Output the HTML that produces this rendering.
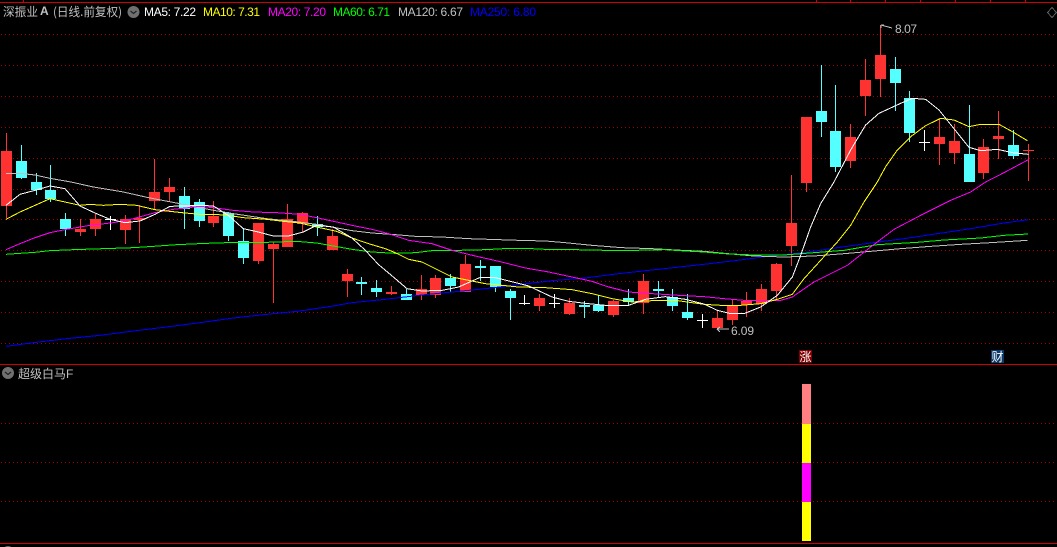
<!DOCTYPE html>
<html><head><meta charset="utf-8"><style>
html,body{margin:0;padding:0;background:#000;width:1057px;height:547px;overflow:hidden}
svg{display:block}
text{font-family:"Liberation Sans","WenQuanYi Zen Hei",sans-serif;font-size:12px}
.c{font-family:"WenQuanYi Zen Hei","Noto Sans CJK SC",sans-serif}
polyline{fill:none;stroke-width:1;vector-effect:non-scaling-stroke}
</style></head><body>
<svg width="1057" height="547" viewBox="0 0 1057 547" xmlns="http://www.w3.org/2000/svg">
<rect width="1057" height="547" fill="#000"/>
<g shape-rendering="crispEdges">
<g stroke="#a00000" stroke-dasharray="1 3" fill="none">
<path d="M1 34.5H1057M1 65.5H1057M1 96.5H1057M1 127.5H1057M1 158.5H1057M1 189.5H1057M1 219.5H1057M1 250.5H1057M1 281.5H1057M1 312.5H1057M1 343.5H1057M1 423.5H1057M1 462.5H1057M1 501.5H1057"/>
</g>
<path fill="#d00000" d="M0 2h1057v1H0zM0 364h1057v1H0zM0 543h1057v1H0zM23 0h1v2h-1zM816 0h1v2h-1zM850 0h1v2h-1zM885 0h1v2h-1zM920 0h1v2h-1zM955 0h1v2h-1zM990 0h1v2h-1zM1025 0h1v2h-1z"/>
<path fill="#ff3232" d="M6 133h1V218h-1zM1 151h11V206H1zM80 219h1V236h-1zM75 229h11V232H75zM95 214h1V236h-1zM90 219h11V229H90zM125 215h1V244h-1zM120 219h11V230H120zM139 205h1V243h-1zM134 218h11V220H134zM154 159h1V210h-1zM149 192h11V201H149zM169 178h1V201h-1zM164 187h11V192H164zM213 201h1V227h-1zM208 216h11V223H208zM258 223h1V264h-1zM253 223h11V261H253zM273 242h1V303h-1zM268 244h11V249H268zM287 204h1V247h-1zM282 219h11V247H282zM302 212h1V232h-1zM297 213h11V224H297zM332 229h1V250h-1zM327 236h11V250H327zM347 269h1V297h-1zM342 274h11V281H342zM391 286h1V295h-1zM386 292h11V294H386zM421 275h1V300h-1zM416 289h11V295H416zM435 275h1V298h-1zM430 278h11V295H430zM465 255h1V292h-1zM460 264h11V292H460zM539 294h1V311h-1zM534 298h11V306H534zM569 298h1V315h-1zM564 303h11V314H564zM613 300h1V317h-1zM608 301h11V315H608zM643 274h1V314h-1zM638 281h11V303H638zM717 311h1V328h-1zM712 318h11V328H712zM732 300h1V325h-1zM727 306h11V320H727zM746 292h1V317h-1zM741 301h11V305H741zM761 284h1V311h-1zM756 289h11V304H756zM776 263h1V301h-1zM771 264h11V291H771zM791 175h1V266h-1zM786 223h11V246H786zM806 117h1V192h-1zM801 117h11V183H801zM850 124h1V168h-1zM845 137h11V161H845zM865 59h1V116h-1zM860 80h11V96H860zM880 25h1V97h-1zM875 55h11V79H875zM939 119h1V165h-1zM934 137h11V144H934zM954 124h1V164h-1zM949 141h11V153H949zM983 139h1V179h-1zM978 147h11V173H978zM998 111h1V159h-1zM993 136h11V139H993zM1028 144h1V181h-1zM1023 150h11V151H1023z"/>
<path fill="#54ffff" d="M21 145h1V179h-1zM16 161h11V178H16zM36 173h1V195h-1zM31 182h11V190H31zM50 165h1V202h-1zM45 190h11V199H45zM65 213h1V236h-1zM60 219h11V229H60zM184 187h1V229h-1zM179 196h11V209H179zM199 199h1V227h-1zM194 202h11V221H194zM228 212h1V241h-1zM223 213h11V236H223zM243 228h1V264h-1zM238 241h11V258H238zM317 216h1V236h-1zM312 224h11V227H312zM361 277h1V295h-1zM356 282h11V284H356zM376 280h1V297h-1zM371 288h11V292H371zM406 289h1V300h-1zM401 294h11V300H401zM450 274h1V292h-1zM445 278h11V286H445zM480 260h1V281h-1zM475 266h11V268H475zM495 266h1V292h-1zM490 266h11V287H490zM510 289h1V320h-1zM505 291h11V298H505zM584 301h1V318h-1zM579 305h11V307H579zM598 295h1V312h-1zM593 305h11V311H593zM628 289h1V306h-1zM623 298h11V302H623zM658 281h1V298h-1zM653 289h11V291H653zM672 289h1V311h-1zM667 297h11V306H667zM687 294h1V320h-1zM682 312h11V318H682zM821 65h1V137h-1zM816 111h11V122H816zM835 85h1V172h-1zM830 131h11V167H830zM895 57h1V111h-1zM890 69h11V83H890zM909 91h1V142h-1zM904 98h11V133H904zM969 105h1V182h-1zM964 154h11V182H964zM1013 130h1V159h-1zM1008 145h11V156H1008z"/>
<path fill="#fff" d="M110 216h1V230h-1zM105 219h11V220H105zM524 295h1V305h-1zM519 303h11V304H519zM554 294h1V308h-1zM549 303h11V304H549zM702 314h1V328h-1zM697 320h11V321H697zM924 130h1V151h-1zM919 142h11V143H919z"/>
<path fill="#ff8080" d="M802 384h9v40h-9z"/>
<path fill="#ffff00" d="M802 424h9v39h-9zM802 502h9v39h-9z"/>
<path fill="#ff00ff" d="M802 463h9v39h-9z"/>
<rect x="799" y="350" width="13" height="13" fill="#800000"/>
<rect x="991" y="350" width="13" height="13" fill="#0a3a6b"/>
</g>

<g shape-rendering="crispEdges">
<g transform="translate(0,0) scale(.33333)">
<polyline stroke="#c0c0c0" points="18,520 60,520 105,525 150,535 213,546"/>
</g>
<g transform="translate(0,182) scale(.33333)">
<polyline stroke="#0000ff" points="18,493 100,482 200,470 300,460 400,447 500,435 600,422 700,408 800,397 900,387 1000,372 1056,362"/>
<polyline stroke="#c0c0c0" points="213,0 280,15 370,30 450,48 540,65 640,85 700,95 800,110 880,118 950,127 1056,146"/>
<polyline stroke="#00ff00" points="18,217 60,214 105,211 150,206 220,203 310,200 400,197 460,193 530,188 620,184 710,181 800,181 890,178 950,183 1000,192 1056,202"/>
<polyline stroke="#ff00ff" points="18,203 60,185 105,167 150,152 200,142 270,130 340,122 400,110 465,92 520,82 600,73 640,77 700,85 760,90 830,92 900,97 950,107 1010,120 1056,130"/>
<polyline stroke="#ffff00" points="18,112 60,90 105,70 150,50 195,60 240,70 270,67 310,70 360,67 410,70 465,83 510,88 555,93 600,97 640,97 685,100 730,107 800,112 850,118 900,123 950,135 1010,148 1056,168"/>
<polyline stroke="#ffffff" points="18,70 60,37 105,25 150,12 195,20 240,72 285,93 330,112 375,122 420,117 465,97 510,73 555,72 600,70 640,72 685,100 730,140 775,150 820,162 865,162 910,150 950,130 1000,135 1056,168"/>
</g>
<g transform="translate(352,182) scale(.33333)">
<polyline stroke="#0000ff" points="0,362 100,352 200,340 300,330 400,320 500,308 600,296 700,288 800,275 900,264 1000,253 1056,247"/>
<polyline stroke="#c0c0c0" points="0,146 60,153 130,158 190,163 270,165 350,170 410,172 500,175 580,177 640,182 720,190 810,197 900,200 990,205 1056,208"/>
<polyline stroke="#00ff00" points="0,202 60,210 130,214 190,212 240,206 320,205 400,203 455,200 540,200 600,203 670,203 760,205 850,205 940,203 1000,207 1056,210"/>
<polyline stroke="#ff00ff" points="0,130 60,142 110,155 170,175 240,185 300,205 370,222 440,238 520,258 590,270 660,285 720,298 770,315 830,330 900,335 980,340 1056,344"/>
<polyline stroke="#ffff00" points="0,168 50,185 100,200 130,212 170,232 210,240 260,265 300,285 350,295 400,305 450,310 500,315 580,317 660,323 720,335 780,350 840,360 900,356 970,355 1056,367"/>
<polyline stroke="#ffffff" points="0,168 40,205 80,248 130,290 165,320 210,327 270,325 320,315 385,286 430,287 475,298 530,312 600,345 650,358 700,364 760,370 830,370 880,352 940,344 1000,352 1056,366"/>
</g>
<g transform="translate(704,182) scale(.33333)">
<polyline stroke="#0000ff" points="0,247 100,235 200,222 300,212 400,197 500,183 600,170 700,155 800,140 900,123 972,113"/>
<polyline stroke="#c0c0c0" points="0,208 60,214 150,222 240,225 330,222 420,215 500,208 590,200 680,193 770,187 860,182 970,175"/>
<polyline stroke="#00ff00" points="0,210 60,215 150,219 240,219 330,212 420,205 520,188 640,181 720,174 830,168 900,160 972,156"/>
<polyline stroke="#ff00ff" points="0,344 60,350 120,355 170,356 230,355 265,345 330,300 430,250 500,195 570,142 650,100 740,55 800,30 845,0"/>
<polyline stroke="#ffff00" points="0,367 50,370 110,370 170,365 220,352 265,337 300,290 350,235 400,180 440,130 480,60 520,0"/>
<polyline stroke="#ffffff" points="0,366 40,385 80,395 120,395 170,375 220,340 265,285 290,220 320,135 350,65 390,0"/>
</g>
<g transform="translate(704,0) scale(.33333)">
<polyline stroke="#ff00ff" points="845,546 900,518 975,478"/>
<polyline stroke="#ffff00" points="520,546 545,500 580,450 620,410 665,377 710,355 750,360 795,380 830,373 885,373 925,395 970,422"/>
<polyline stroke="#ffffff" points="390,546 440,450 485,375 525,340 590,310 625,295 665,298 705,330 745,380 795,442 830,452 880,448 925,458 973,463"/>
</g>
<path d="M881 25L892 28M881 25h3M881 25v3" stroke="#c0c0c0" fill="none"/>
<path d="M717 329H729M717 329l3 -2M717 329l3 3" stroke="#c0c0c0" fill="none"/>
<path d="M1052 7.5L1056.5 12.5L1052 17.5L1047.5 12.5Z" stroke="#606060" fill="none"/>
</g>

<text class="c" x="3" y="16" fill="#c0c0c0" textLength="35" lengthAdjust="spacingAndGlyphs">深振业</text>
<text x="40" y="15" fill="#c0c0c0" font-weight="bold">A</text>
<text class="c" x="53" y="16" fill="#c0c0c0" textLength="69" lengthAdjust="spacingAndGlyphs">(日线.前复权)</text>
<circle cx="133.5" cy="12" r="6" fill="#707070"/>
<path d="M130.5 11l3 2.5l3 -2.5" stroke="#222" stroke-width="1.2" fill="none"/>
<text x="144" y="16" fill="#ffffff" textLength="52">MA5: 7.22</text>
<text x="203" y="16" fill="#ffff00" textLength="57">MA10: 7.31</text>
<text x="268" y="16" fill="#ff00ff" textLength="58">MA20: 7.20</text>
<text x="333" y="16" fill="#00ff00" textLength="57">MA60: 6.71</text>
<text x="398" y="16" fill="#c0c0c0" textLength="65">MA120: 6.67</text>
<text x="470" y="16" fill="#0000ff" textLength="66">MA250: 6.80</text>

<text x="895" y="33" fill="#c0c0c0" textLength="22">8.07</text>
<text x="731" y="335" fill="#c0c0c0" textLength="23">6.09</text>

<text class="c" x="799.5" y="361" fill="#ffffff">涨</text>
<text class="c" x="991.5" y="361" fill="#ffffff">财</text>

<circle cx="8" cy="373" r="6" fill="#707070"/>
<path d="M5 372l3 2.5l3 -2.5" stroke="#222" stroke-width="1.2" fill="none"/>
<text class="c" x="18" y="378" fill="#c0c0c0" textLength="48" lengthAdjust="spacingAndGlyphs">超级白马</text>
<text x="66" y="378" fill="#c0c0c0">F</text>
<circle cx="8" cy="552" r="6" fill="#707070"/>
</svg>
</body></html>
